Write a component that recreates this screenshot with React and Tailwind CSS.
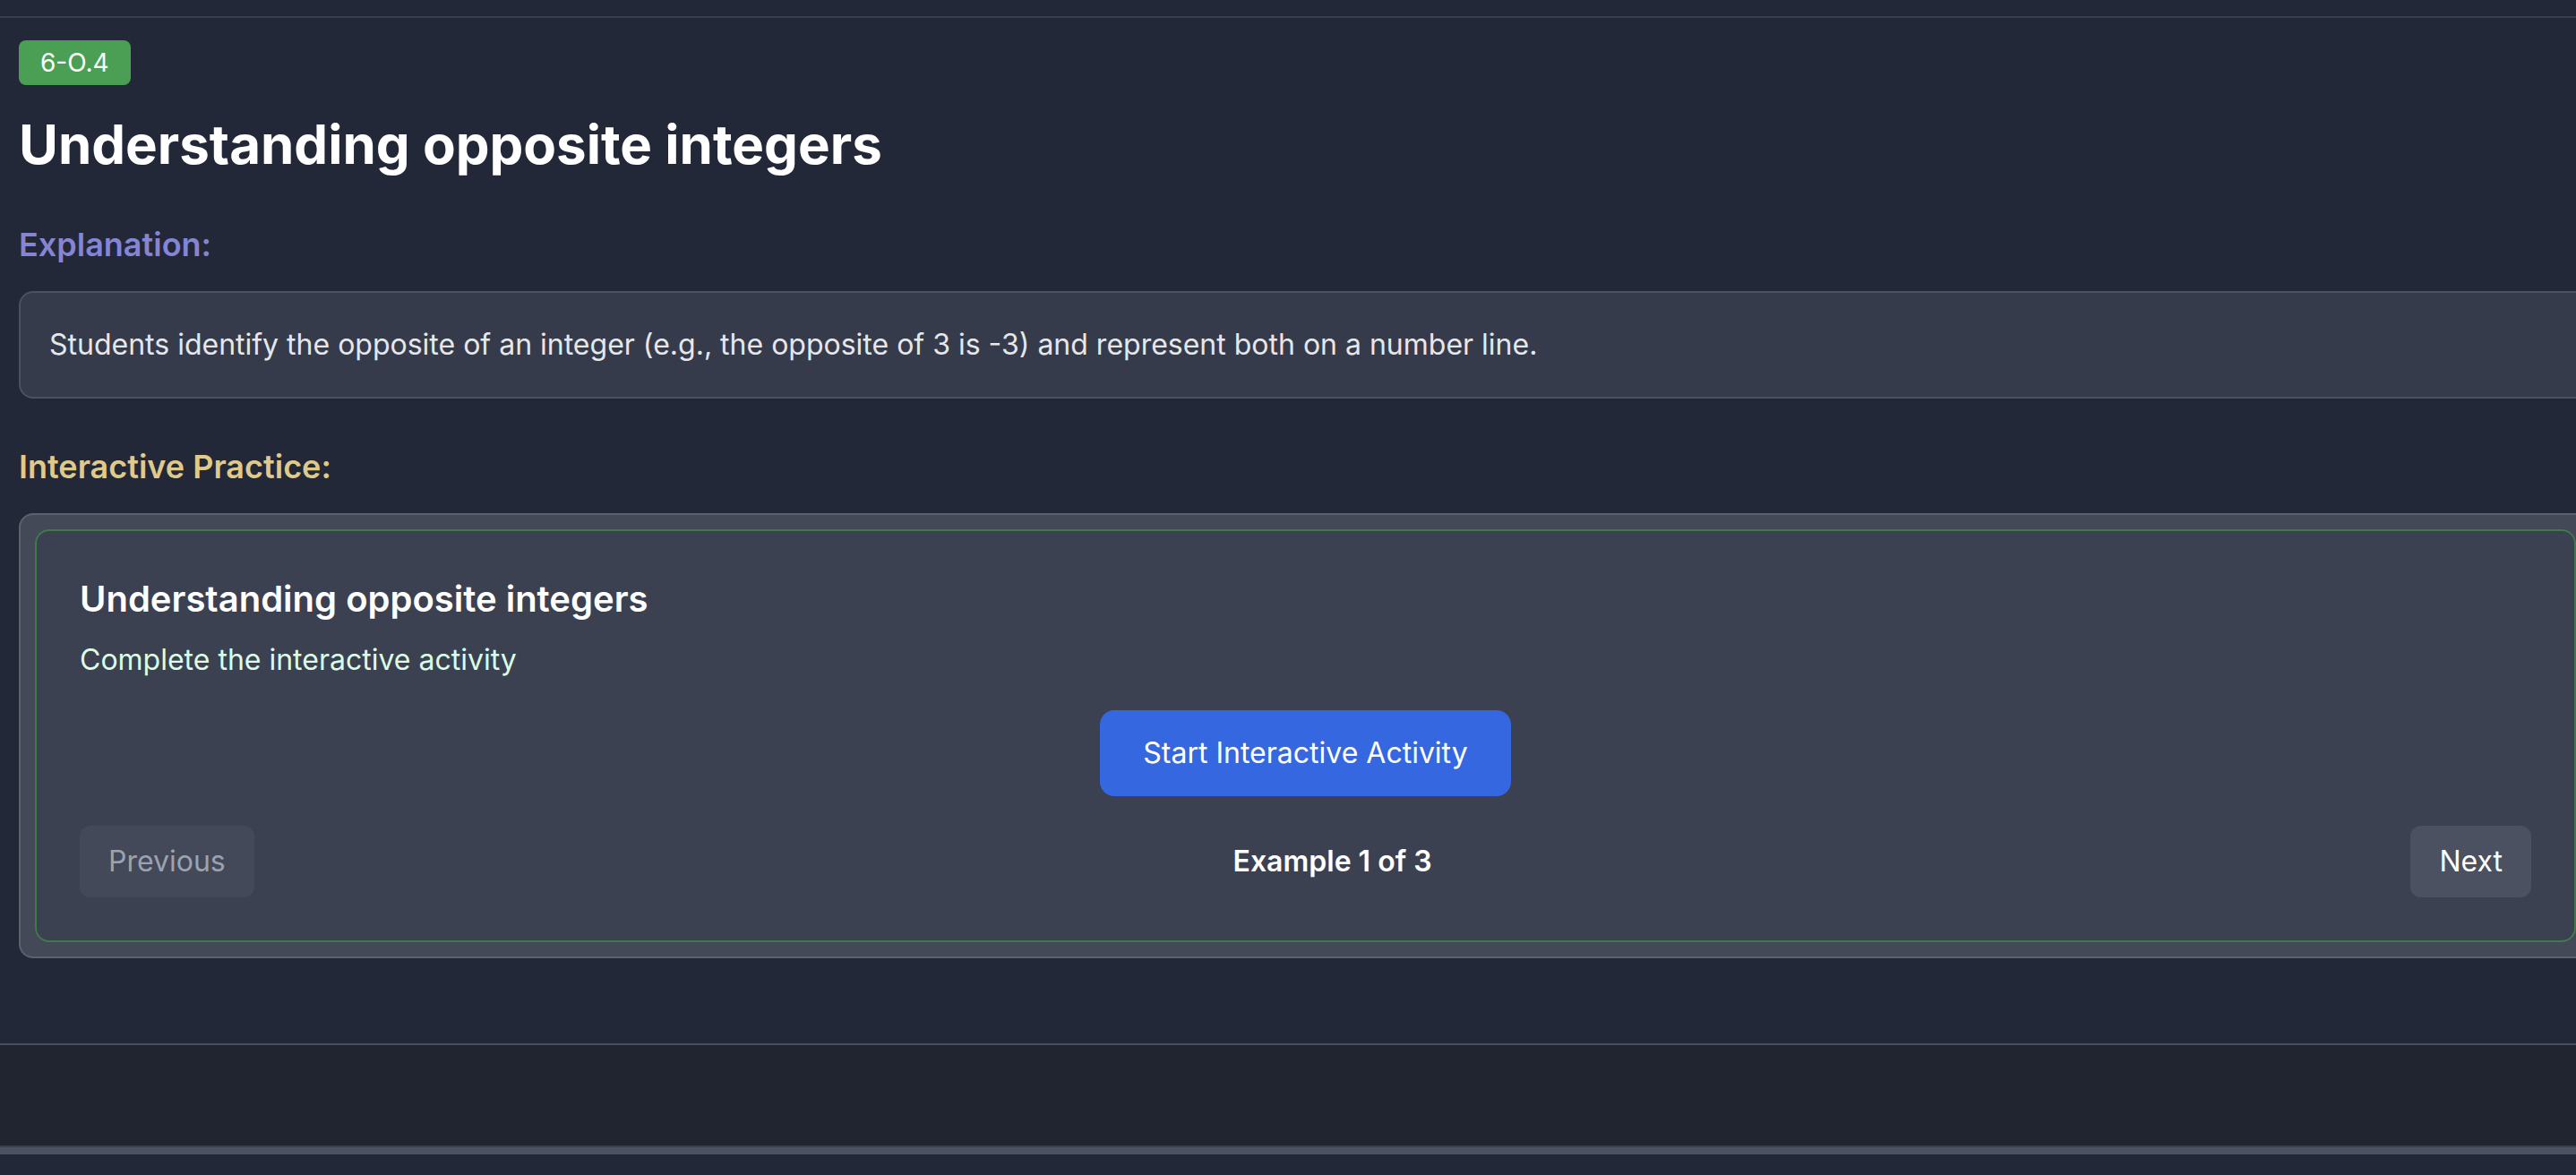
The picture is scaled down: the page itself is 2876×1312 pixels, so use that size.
import React from 'react';

// Vista de práctica de un estándar (todo a escala 2x)
const App = () => {
  return (
    <div className="min-h-screen w-full overflow-hidden bg-[#222837] font-['Inter','Noto_Sans',sans-serif] text-white">
      <div className="h-[18px]" />
      <div className="border-t-2 border-b-2 border-t-[#393e4d] border-b-[#4a4f5e] pt-[25px] pb-[95px]">
        <div className="pl-[21px] -mr-[18px]">
          <span className="inline-block rounded-lg bg-[#4a9f54] px-6 py-[5px] text-[28px] leading-[40px] text-white">
            6-O.4
          </span>

          <h1 className="mt-[30px] text-[60px] leading-[72px] font-bold text-white">Understanding opposite integers</h1>

          <h3 className="mt-12 text-[36px] leading-[56px] font-semibold text-[#8585d6]">Explanation:</h3>
          <div className="mt-6 rounded-2xl border-2 border-[#4b5163] bg-[#363b4b] px-8 py-[34px]">
            <p className="text-[32px] leading-[48px] text-[#e5e7eb]">
              Students identify the opposite of an integer (e.g., the opposite of 3 is -3) and represent both on a number line.
            </p>
          </div>

          <h3 className="mt-12 text-[36px] leading-[56px] font-semibold text-[#dfca8b]">Interactive Practice:</h3>
          <div className="mt-6 rounded-2xl border-2 border-[#5b616d] bg-[#434957] p-4">
            <div className="rounded-2xl border-2 border-[#3f7a4b] bg-[#3b4150] p-12">
              <h2 className="text-[40px] leading-[56px] font-semibold text-white">Understanding opposite integers</h2>
              <p className="mt-4 text-[32px] leading-[48px] text-[#dcfce7]">Complete the interactive activity</p>
              <div className="mt-8 flex justify-center">
                <button className="rounded-2xl bg-[#3467e0] px-12 py-[24px] text-[32px] leading-[48px] text-white">
                  Start Interactive Activity
                </button>
              </div>
              <div className="mt-[33px] flex items-center justify-between">
                <button className="rounded-xl bg-[#434958] px-8 py-4 text-[32px] leading-[48px] text-[#9ca3af]">
                  Previous
                </button>
                <span className="text-[32px] leading-[48px] font-semibold text-white">Example 1 of 3</span>
                <button className="rounded-xl bg-[#4b5160] px-8 py-4 text-[32px] leading-[48px] text-white">
                  Next
                </button>
              </div>
            </div>
          </div>
        </div>
      </div>
      <div className="h-[112px] bg-[#20252f]" />
      <div className="h-[2px] bg-[#3a3f4d]" />
      <div className="h-[8px] bg-[#4b5161]" />
      <div className="h-[23px] bg-[#222837]" />
    </div>
  );
};

export default App;
